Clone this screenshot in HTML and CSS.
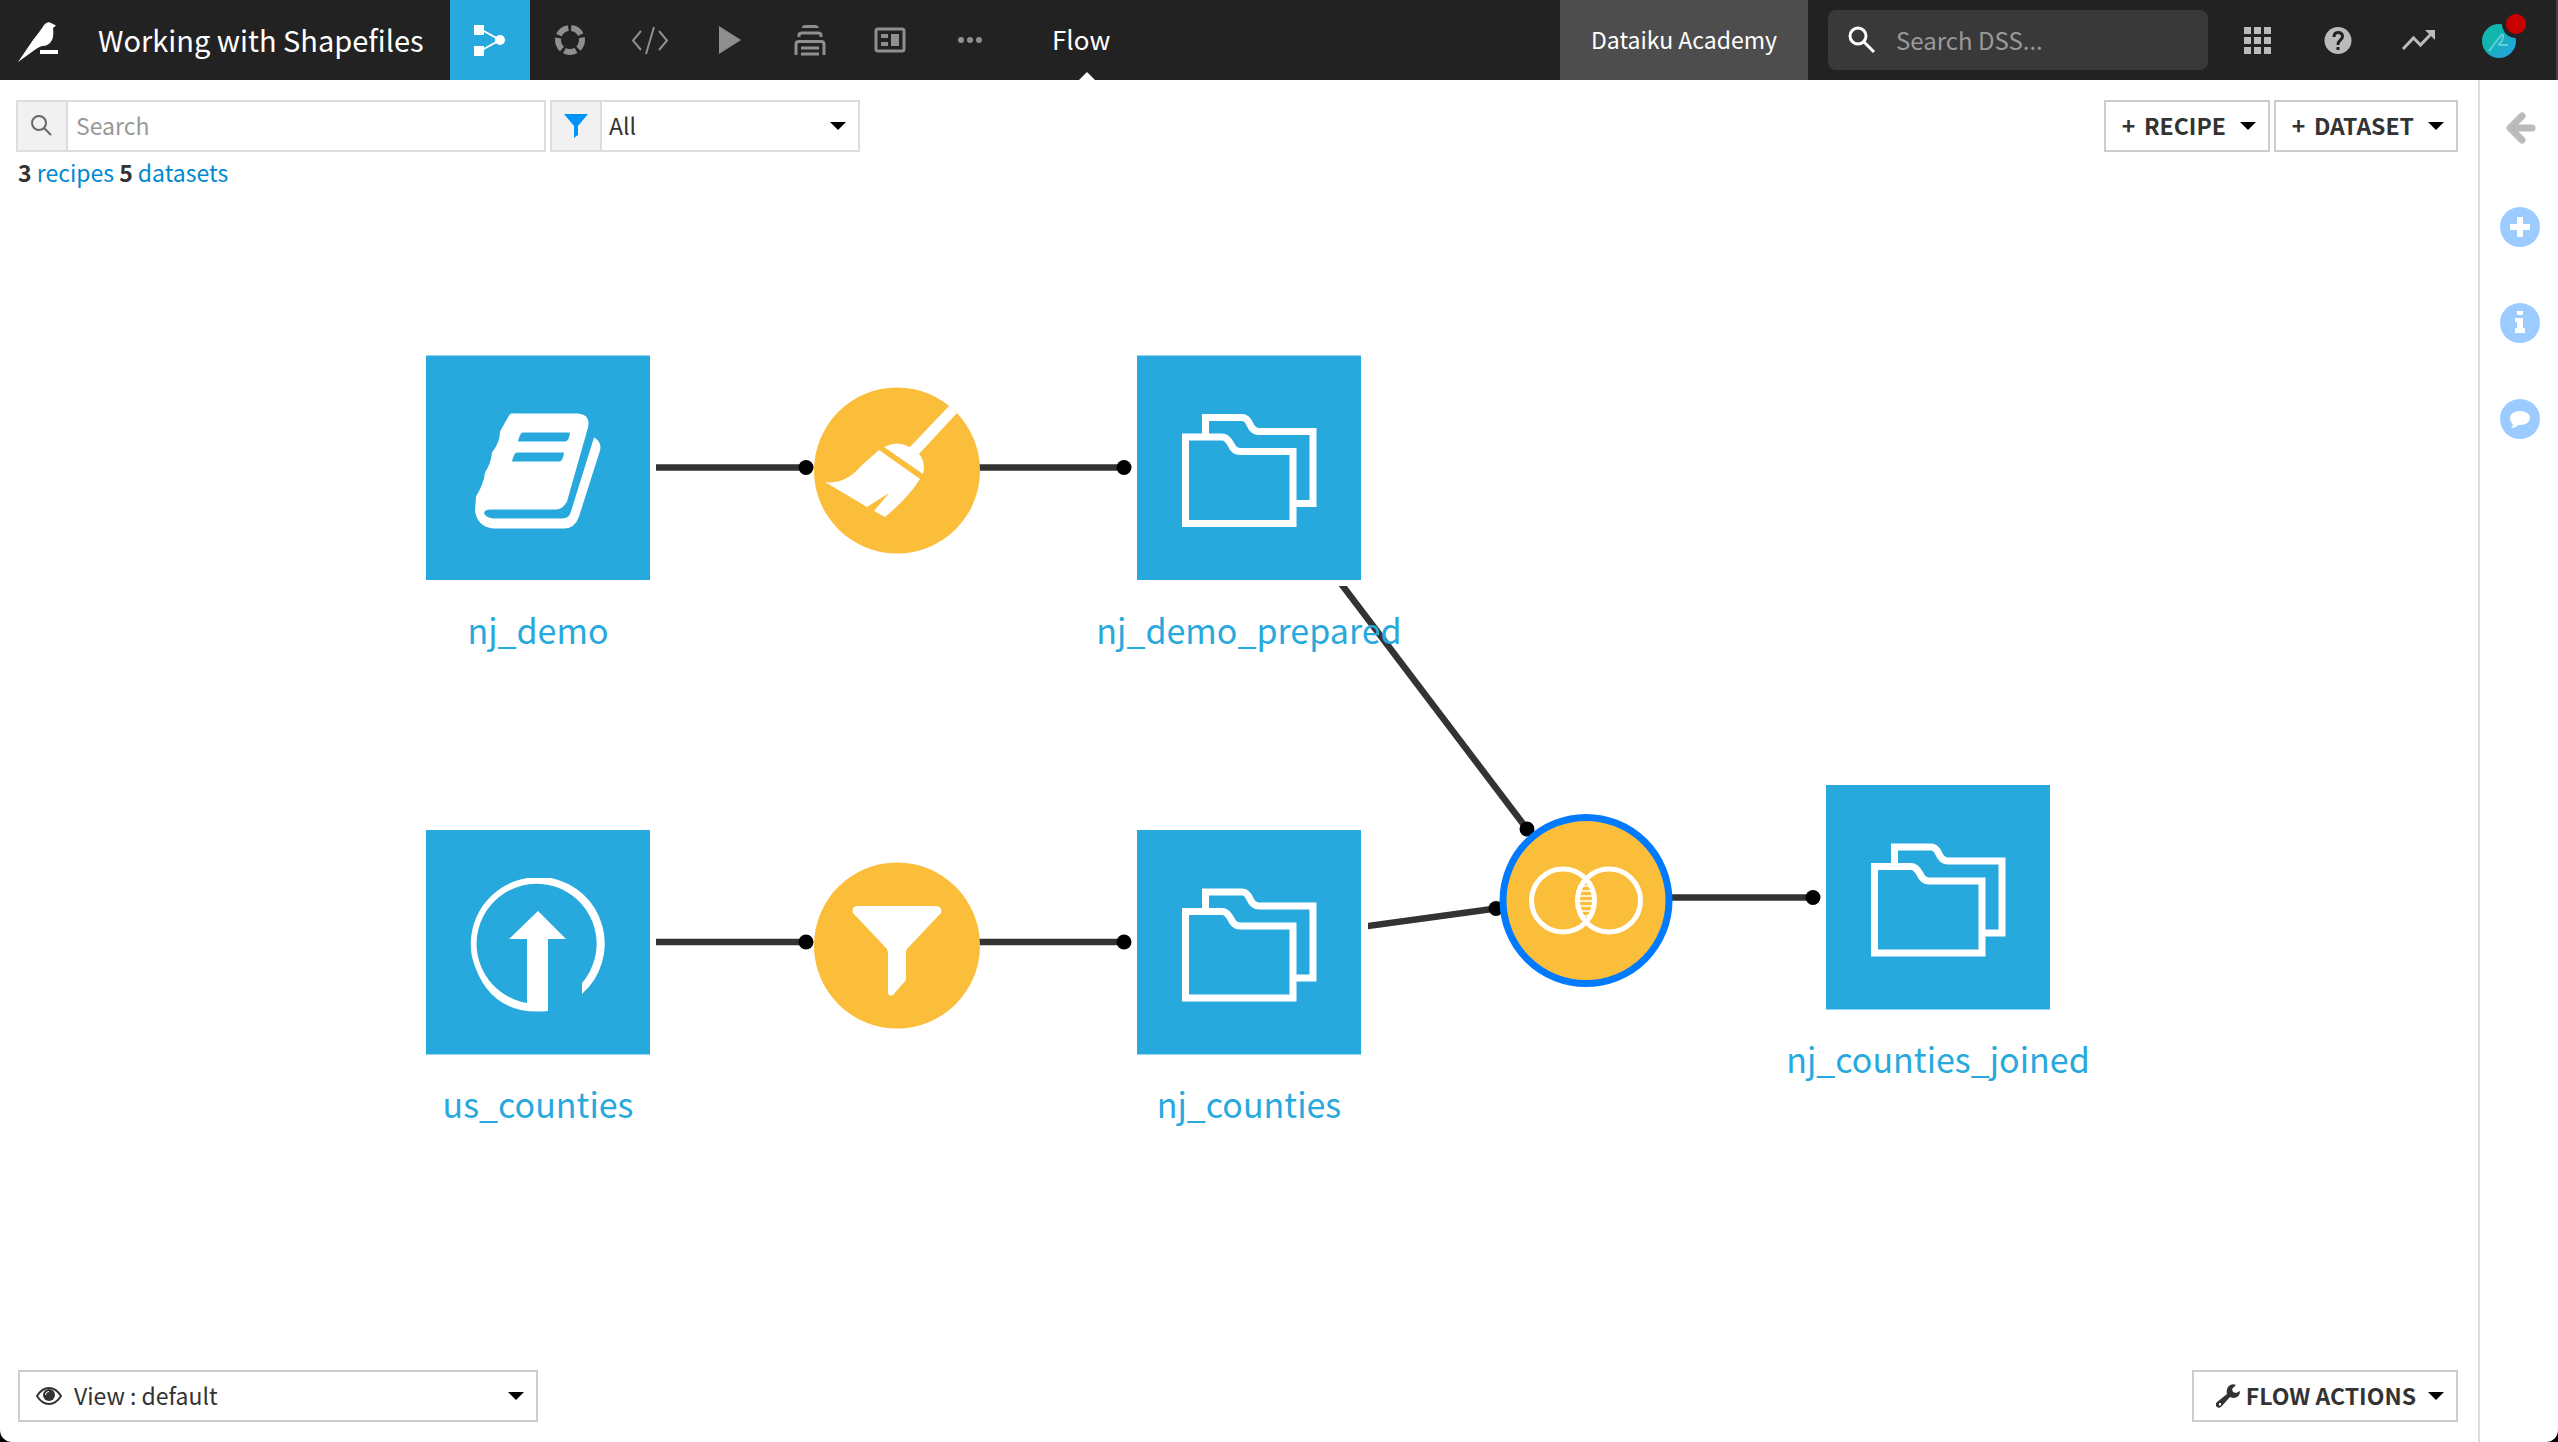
FILE: index.html
```html
<!DOCTYPE html>
<html lang="en">
<head>
<meta charset="utf-8">
<title>Working with Shapefiles - Flow</title>
<link rel="stylesheet" href="styles.css">
</head>
<body>
<header class="topbar">
  <a class="brand" href="#">
    <svg class="brand-logo" viewBox="0 0 44 44" aria-hidden="true">
      <path d="M2 44 L17 22 Q25 12 28 7 Q31 3 35 5 L40 7.500 L37 10 Q38 18 36 22 Q33 28 26 28 Q23 29 20 31 Z"/>
      <path d="M24 32 L42 32 L42 36 L24 36 Z"/>
    </svg>
    <span class="brand-title">Working with Shapefiles</span>
  </a>
  <nav class="tabs" aria-label="Project sections">
    <button class="tab tab-active" aria-label="Flow">
      <svg viewBox="0 0 80 80"><path d="M24 25h10v10H24zM24 46h10v10H24z"/><circle cx="50" cy="40" r="5"/><path class="line thin" d="M32 30 L50 40 L32 50"/></svg>
    </button>
    <button class="tab" aria-label="Lab">
      <svg viewBox="0 0 80 80"><circle class="ring" cx="40" cy="40" r="12" pathLength="100" transform="rotate(-84 40 40)"/></svg>
    </button>
    <button class="tab" aria-label="Code">
      <svg viewBox="0 0 80 80"><path class="line thin" d="M31 31 L23 40.500 L31 50 M49 31 L57 40.500 L49 50 M44 27 L36 54"/></svg>
    </button>
    <button class="tab" aria-label="Jobs">
      <svg viewBox="0 0 80 80"><path d="M29 26 L51 40 L29 54 Z"/></svg>
    </button>
    <button class="tab" aria-label="Automation">
      <svg viewBox="0 0 80 80"><path d="M32 28 Q32 25 35 25 H45 Q48 25 49 28 Z"/><path class="line" d="M29 37 V35 Q29 33 32 33 H48 Q51 33 51 35 V37 M26 55 V44 Q26 41.500 29 41.500 H51 Q54 41.500 54 44 V55"/><path class="line" d="M31 48 H49 M31 54 H49"/></svg>
    </button>
    <button class="tab" aria-label="Dashboards">
      <svg viewBox="0 0 80 80"><rect class="line" x="26" y="29" width="28" height="22" rx="2"/><path d="M31 34h7v4h-7zM31 42h7v4h-7zM41 34h8v12h-8z"/></svg>
    </button>
    <button class="tab" aria-label="More">
      <svg viewBox="0 0 80 80"><circle cx="31" cy="40" r="3"/><circle cx="40" cy="40" r="3"/><circle cx="49" cy="40" r="3"/></svg>
    </button>
  </nav>
  <div class="page-name">Flow</div>
  <div class="top-right">
    <a class="academy" href="#">Dataiku Academy</a>
    <label class="dss-search">
      <svg viewBox="0 0 28 28" aria-hidden="true"><circle cx="10" cy="10" r="8"/><path d="M16 16 L26 26"/></svg>
      <input type="text" placeholder="Search DSS..." aria-label="Search DSS">
    </label>
    <div class="top-icons">
      <button class="tab" aria-label="Applications">
        <svg viewBox="0 0 80 80"><path d="M26 27h7v7h-7zM36 27h7v7h-7zM46 27h7v7h-7zM26 37h7v7h-7zM36 37h7v7h-7zM46 37h7v7h-7zM26 47h7v7h-7zM36 47h7v7h-7zM46 47h7v7h-7z"/></svg>
      </button>
      <button class="tab" aria-label="Help">
        <svg viewBox="0 0 80 80"><circle cx="40" cy="40.500" r="13.500"/><path class="cut-line" d="M36 37 Q36 32.500 40 32.500 Q44.500 32.500 44.500 36.500 Q44.500 38.500 42 40.500 Q40 42 40 45"/><path class="cut" d="M38.500 47h3v3h-3z"/></svg>
      </button>
      <button class="tab" aria-label="Activity">
        <svg viewBox="0 0 80 80"><path class="line" d="M25 49 L35.500 38 L42.500 45 L54 33"/><path d="M47 30 H57 V40 Z"/></svg>
      </button>
      <button class="tab" aria-label="Profile">
        <svg viewBox="0 0 80 80">
          <defs><linearGradient id="avatar" x1="0" y1="0" x2="1" y2="1"><stop offset="0.400" stop-color="#10b5ae"/><stop offset="1" stop-color="#2c9ff0"/></linearGradient></defs>
          <circle cx="41" cy="41" r="17" fill="url(#avatar)"/>
          <path class="avatar-bird" d="M31 51 L44 34 M45 34 Q46 41 40 45 M41 45 H50"/>
          <circle class="cut" cx="58" cy="24" r="14"/>
          <circle class="alert" cx="58" cy="24" r="10"/>
        </svg>
      </button>
    </div>
  </div>
</header>

<div class="workspace">
  <main class="flow">
    <svg class="graph" viewBox="0 80 2478 1362" role="img" aria-label="Flow graph">
      <defs>
        <g id="folders">
          <path d="M68.500 80 V62 H105 Q110 62 113 69 Q116 76 122 76 H176 V148 H158"/>
          <path d="M48.500 81.500 H85 Q90 81.500 94 89 Q97 96 103 96 H156 V168 H48.500 Z"/>
        </g>
        <clipPath id="below-prepared"><path d="M1300 586 H1600 V860 H1300 Z"/></clipPath>
        <clipPath id="after-counties"><path d="M1368 880 H1600 V960 H1368 Z"/></clipPath>
        <clipPath id="lens"><circle cx="1563" cy="900" r="32"/></clipPath>
      </defs>

      <g class="edges">
        <path d="M656 467.500 H806 M970 467.500 H1124 M656 942 H806 M970 942 H1124 M1660 897.500 H1813"/>
        <path d="M1336 577 L1527 829" clip-path="url(#below-prepared)"/>
        <path d="M1360 927 L1496 908.500" clip-path="url(#after-counties)"/>
      </g>
      <g class="dots">
        <circle cx="806" cy="467.500" r="7.500"/><circle cx="1124" cy="467.500" r="7.500"/>
        <circle cx="806" cy="942" r="7.500"/><circle cx="1124" cy="942" r="7.500"/>
        <circle cx="1527" cy="829" r="7.500"/><circle cx="1496" cy="908.500" r="7.500"/>
        <circle cx="1813" cy="897.500" r="7.500"/>
      </g>

      <g class="recipe">
        <circle cx="897" cy="470.500" r="83"/>
        <path class="glyph" d="M949 406 L957 413 L919 454 Q926 462 923 474 L884 447 Q897 440 910 447 Z M879 450 L920 479 Q908 498 885 517 L874 511 L889 493 L867 507 L825 482 Q845 485 862 465 Z"/>
      </g>
      <g class="recipe">
        <circle cx="897" cy="945.500" r="83"/>
        <path class="glyph" d="M857 906 H936 Q943 907 941 913 L907 949 Q906 950 906 953 V980 L893 995 Q889 997 888 993 V953 Q888 950 886 948 L853 913 Q851 907 857 906 Z"/>
      </g>
      <g class="recipe">
        <circle class="selected" cx="1586" cy="900.500" r="83"/>
        <path class="hatch" clip-path="url(#lens)" d="M1578 886 H1594 M1576 891 H1596 M1576 896 H1596 M1576 901 H1596 M1576 906 H1596 M1577 911 H1595 M1580 916 H1592 M1581 881 H1591"/>
        <circle class="venn" cx="1563" cy="900.500" r="31.500"/>
        <circle class="venn" cx="1609" cy="900.500" r="31.500"/>
      </g>

      <g class="dataset" transform="translate(425 355.500)">
        <rect x="1" width="224" height="224.500"/>
        <path class="glyph" fill-rule="evenodd" d="M89 58 H153 Q166 59 163 72 L142 146 Q138 154 130 154 H66 Q59 154 59 158 Q62 163 70 163 H137 Q144 163 146 156 L169 82 Q177 86 175 95 L154 161 Q150 173 139 173 H68 Q52 171 50 155 L51 141 Q59 128 60 117 Q66 108 67 97 Q75 87 75 76 Q80 67 84 60 Q86 57 89 58 Z M98 77 Q95 77 93 86 H140 Q144 86 145 77 Z M92 97 Q89 97 87 106 H134 Q138 106 139 97 Z"/>
      </g>
      <g class="dataset" transform="translate(425 830)">
        <rect x="1" width="224" height="224.500"/>
        <path class="glyph" d="M113 81 L141 109 H123 V181 Q63 187 47 127 A67 67 0 0 1 102 48 H126 A67 67 0 0 1 157 164 V153 A60 60 0 1 0 102 173 V109 H84 Z"/>
      </g>
      <g class="dataset" transform="translate(1137 355.500)"><rect width="224" height="224.500"/><use class="outline" href="#folders"/></g>
      <g class="dataset" transform="translate(1137 830)"><rect width="224" height="224.500"/><use class="outline" href="#folders"/></g>
      <g class="dataset" transform="translate(1826 785)"><rect width="224" height="224.500"/><use class="outline" href="#folders"/></g>

      <g class="names">
        <text x="538" y="644">nj_demo</text>
        <text x="1249" y="644">nj_demo_prepared</text>
        <text x="538" y="1118">us_counties</text>
        <text x="1249" y="1118">nj_counties</text>
        <text x="1938" y="1073">nj_counties_joined</text>
      </g>
    </svg>

    <div class="toolbar">
      <div class="filters">
        <div class="field field-search">
          <label class="addon" for="flow-search"><svg class="icon-search" viewBox="0 0 24 24" aria-hidden="true"><circle cx="9" cy="9" r="7"/><path d="M14 14 L21 21"/></svg></label>
          <input id="flow-search" type="text" placeholder="Search">
        </div>
        <div class="field field-filter">
          <label class="addon" for="flow-filter"><svg class="icon-filter" viewBox="0 0 24 24" aria-hidden="true"><path d="M0 0 H24 L14 12 V21 L10 24 V12 Z"/></svg></label>
          <div class="picker">
            <select id="flow-filter" aria-label="Filter"><option>All</option></select>
            <svg class="caret" viewBox="0 0 16 8" aria-hidden="true"><path d="M0 0 H16 L8 8 Z"/></svg>
          </div>
        </div>
      </div>
      <div class="actions">
        <button class="btn"><span class="btn-text"><span class="plus">+</span>RECIPE</span><svg class="caret" viewBox="0 0 16 8" aria-hidden="true"><path d="M0 0 H16 L8 8 Z"/></svg></button>
        <button class="btn"><span class="btn-text"><span class="plus">+</span>DATASET</span><svg class="caret" viewBox="0 0 16 8" aria-hidden="true"><path d="M0 0 H16 L8 8 Z"/></svg></button>
      </div>
    </div>
    <p class="summary"><b>3</b> <a href="#">recipes</a> <b>5</b> <a href="#">datasets</a></p>

    <div class="bottom">
      <div class="view-picker">
        <svg class="icon-eye" viewBox="0 0 26 18" aria-hidden="true"><path class="lid" d="M1 9 Q6 1 13 1 Q20 1 25 9 Q20 17 13 17 Q6 17 1 9 Z"/><circle cx="13" cy="8" r="6"/><path class="glint" d="M9.500 8 Q9.500 4.500 13 4.500"/></svg>
        <div class="picker">
          <select aria-label="View"><option>View : default</option></select>
          <svg class="caret" viewBox="0 0 16 8" aria-hidden="true"><path d="M0 0 H16 L8 8 Z"/></svg>
        </div>
      </div>
      <button class="btn btn-flow">
        <svg class="icon-wrench" viewBox="0 0 24 24" aria-hidden="true"><path fill-rule="evenodd" d="M20 1 L16 5 L17 8 L20 9 L24 7 Q24 13 18 14 Q16 14 14 13 L5 23 Q2 25 0 22 Q-1 20 1 18 L11 10 Q10 6 12 3 Q15 -1 20 1 Z M3 19 V21.500 H5 V19 Z"/></svg>
        <span class="btn-text">FLOW ACTIONS</span><svg class="caret" viewBox="0 0 16 8" aria-hidden="true"><path d="M0 0 H16 L8 8 Z"/></svg>
      </button>
    </div>
  </main>

  <aside class="rail">
    <button class="rail-btn rail-toggle" aria-label="Open panel"><svg viewBox="0 0 40 40"><path class="arrow" d="M22 8 L10 20 L22 32 M12 20 H32"/></svg></button>
    <button class="rail-btn" aria-label="Actions"><svg viewBox="0 0 40 40"><circle cx="20" cy="20" r="20"/><path class="mark" d="M17 10h6v7h7v6h-7v7h-6v-7h-7v-6h7z"/></svg></button>
    <button class="rail-btn" aria-label="Details"><svg viewBox="0 0 40 40"><circle cx="20" cy="20" r="20"/><path class="mark" d="M17 8h6v4h-6zM15 15h8v10h2v5H15v-5h2v-6h-2z"/></svg></button>
    <button class="rail-btn" aria-label="Discussions"><svg viewBox="0 0 40 40"><circle cx="20" cy="20" r="20"/><path class="mark" d="M20 12c6 0 10 3 10 7s-4 7-10 7h-2q-2 3-7 3 2-2 2-4-3-2-3-6c0-4 4-7 10-7z"/></svg></button>
  </aside>
</div>
</body>
</html>
```

FILE: styles.css
```css
* { box-sizing: border-box; }

html { background: #000; }

body {
  margin: 0;
  min-height: 100vh;
  display: flex;
  flex-direction: column;
  overflow: hidden;
  background: #fff;
  border-radius: 0 0 12px 12px;
  color: #333;
  font-family: "Noto Sans CJK SC", "Noto Sans", sans-serif;
  font-size: 23px;
  line-height: 32px;
}

button, input, select {
  margin: 0;
  padding: 0;
  border: 0;
  background: none;
  color: inherit;
  font: inherit;
  appearance: none;
}

a { color: #0289d1; text-decoration: none; }
svg { display: block; }

/* Top bar */
.topbar {
  display: flex;
  align-items: stretch;
  height: 80px;
  border-right: 2px solid #444;
  background: #222;
  color: #fff;
}

.brand {
  display: flex;
  align-items: center;
  gap: 38px;
  width: 450px;
  padding-left: 16px;
  color: #fff;
  font-size: 29px;
  white-space: nowrap;
}

.brand-logo { width: 44px; height: 44px; fill: #fff; }
.brand-title { padding-bottom: 2px; }
.tabs, .top-icons, .top-right { display: flex; }

.tab { width: 80px; height: 80px; color: #8f8f8f; }
.tab svg { width: 80px; height: 80px; fill: currentColor; }
.tab-active { background: #28a9dd; color: #fff; }
.tab .line { fill: none; stroke: currentColor; stroke-width: 3; }
.tab .thin { stroke-width: 2; }
.tab .ring { fill: none; stroke: currentColor; stroke-width: 6; stroke-dasharray: 16 4; }
.tab .cut { fill: #222; }
.tab .cut-line { fill: none; stroke: #222; stroke-width: 3; }
.tab .alert { fill: #c80000; }
.tab .avatar-bird { fill: none; stroke: #5fcfd8; stroke-width: 2; }

.page-name {
  position: relative;
  margin-left: 42px;
  padding-right: 12px;
  font-size: 26px;
  line-height: 78px;
}

.page-name::after {
  content: "";
  position: absolute;
  left: 50%;
  bottom: 0;
  margin-left: -8px;
  border: 8px solid transparent;
  border-top: 0;
  border-bottom-color: #fff;
}

.top-right { margin-left: auto; padding-right: 18px; }

.academy {
  width: 248px;
  background: #4d4d4d;
  color: #fff;
  line-height: 78px;
  text-align: center;
}

.dss-search {
  display: flex;
  align-items: center;
  gap: 20px;
  width: 380px;
  height: 60px;
  margin: 10px 10px 0 20px;
  padding: 0 20px;
  border-radius: 8px;
  background: #393939;
  font-size: 24px;
}

.dss-search svg { width: 28px; height: 28px; fill: none; stroke: #fff; stroke-width: 3; flex: none; }
.dss-search input { min-width: 0; flex: 1; }
.dss-search input::placeholder { color: #999; opacity: 1; }
.top-icons .tab { color: #bbb; }

/* Workspace */
.workspace { display: flex; flex: 1; }

.flow {
  position: relative;
  display: flex;
  flex: 1;
  flex-direction: column;
}

.toolbar, .summary, .bottom { position: relative; }

.toolbar {
  display: flex;
  justify-content: space-between;
  padding: 20px 20px 0 16px;
}

.filters, .actions { display: flex; gap: 4px; }

.field { display: flex; height: 52px; border: 2px solid #ddd; background: #fff; }
.field-search { width: 530px; }
.field-filter { width: 310px; }
.field > input { flex: 1; padding: 0 0 2px 8px; }
.field > input::placeholder { color: #999; opacity: 1; }
.field select { padding-left: 7px; }

.addon {
  display: flex;
  align-items: center;
  justify-content: center;
  width: 50px;
  border-right: 2px solid #ddd;
  background: #f1f1f1;
}

.icon-search { width: 24px; height: 24px; fill: none; stroke: #666; stroke-width: 2; }
.icon-filter { width: 24px; height: 24px; fill: #0295f7; }

.picker { display: grid; flex: 1; align-items: center; }
.picker > * { grid-area: 1 / 1; }
.picker .caret { justify-self: end; margin-right: 12px; pointer-events: none; }
.picker select { height: 48px; padding-bottom: 2px; }

.caret { width: 16px; height: 8px; fill: #000; }

.btn {
  display: flex;
  align-items: center;
  gap: 14px;
  height: 52px;
  padding: 0 12px 0 15px;
  border: 2px solid #ccc;
  background: #fff;
  font-weight: 600;
  white-space: nowrap;
}

.btn-text { display: flex; gap: 8px; padding-bottom: 2px; }
.plus { width: 15px; text-align: center; }

.summary { margin: 4px 0 0 18px; }

.bottom {
  display: flex;
  justify-content: space-between;
  margin-top: auto;
  padding: 0 20px 20px 18px;
}

.view-picker {
  display: flex;
  align-items: center;
  gap: 12px;
  width: 520px;
  height: 52px;
  padding-left: 16px;
  border: 2px solid #ccc;
  background: #fff;
}

.icon-eye { width: 26px; height: 18px; fill: #333; }
.icon-eye .lid { fill: none; stroke: #333; stroke-width: 2; }
.icon-eye .glint { fill: none; stroke: #fff; stroke-width: 1; }

.btn-flow { padding-left: 22px; gap: 12px; }
.btn-flow .icon-wrench { width: 24px; height: 24px; margin-right: -6px; fill: #333; }

/* Side rail */
.rail {
  display: flex;
  flex-direction: column;
  align-items: center;
  gap: 56px;
  width: 80px;
  padding: 28px 0 0 2px;
  border-left: 2px solid #ddd;
}

.rail-btn { height: 40px; }
.rail-toggle { margin-bottom: 3px; }
.rail-btn svg { width: 40px; height: 40px; fill: #9ccbff; }
.rail .mark { fill: #fff; }
.rail .arrow { fill: none; stroke: #bbb; stroke-width: 7; stroke-linecap: round; stroke-linejoin: round; }

/* Graph */
.graph { position: absolute; inset: 0; width: 100%; height: 100%; }
.edges { fill: none; stroke: #333; stroke-width: 6.500; }
.dots { fill: #000; }
.recipe { fill: #fabe3a; }
.dataset { fill: #28a9dd; }
.graph .glyph { fill: #fff; }
.outline { fill: none; stroke: #fff; stroke-width: 7; }
.selected { stroke: #007bff; stroke-width: 7; }
.venn { fill: none; stroke: #fff; stroke-width: 5; }
.hatch { stroke: #fff; stroke-width: 1.500; }
.names { fill: #28a9dd; font-size: 34px; text-anchor: middle; }
```
